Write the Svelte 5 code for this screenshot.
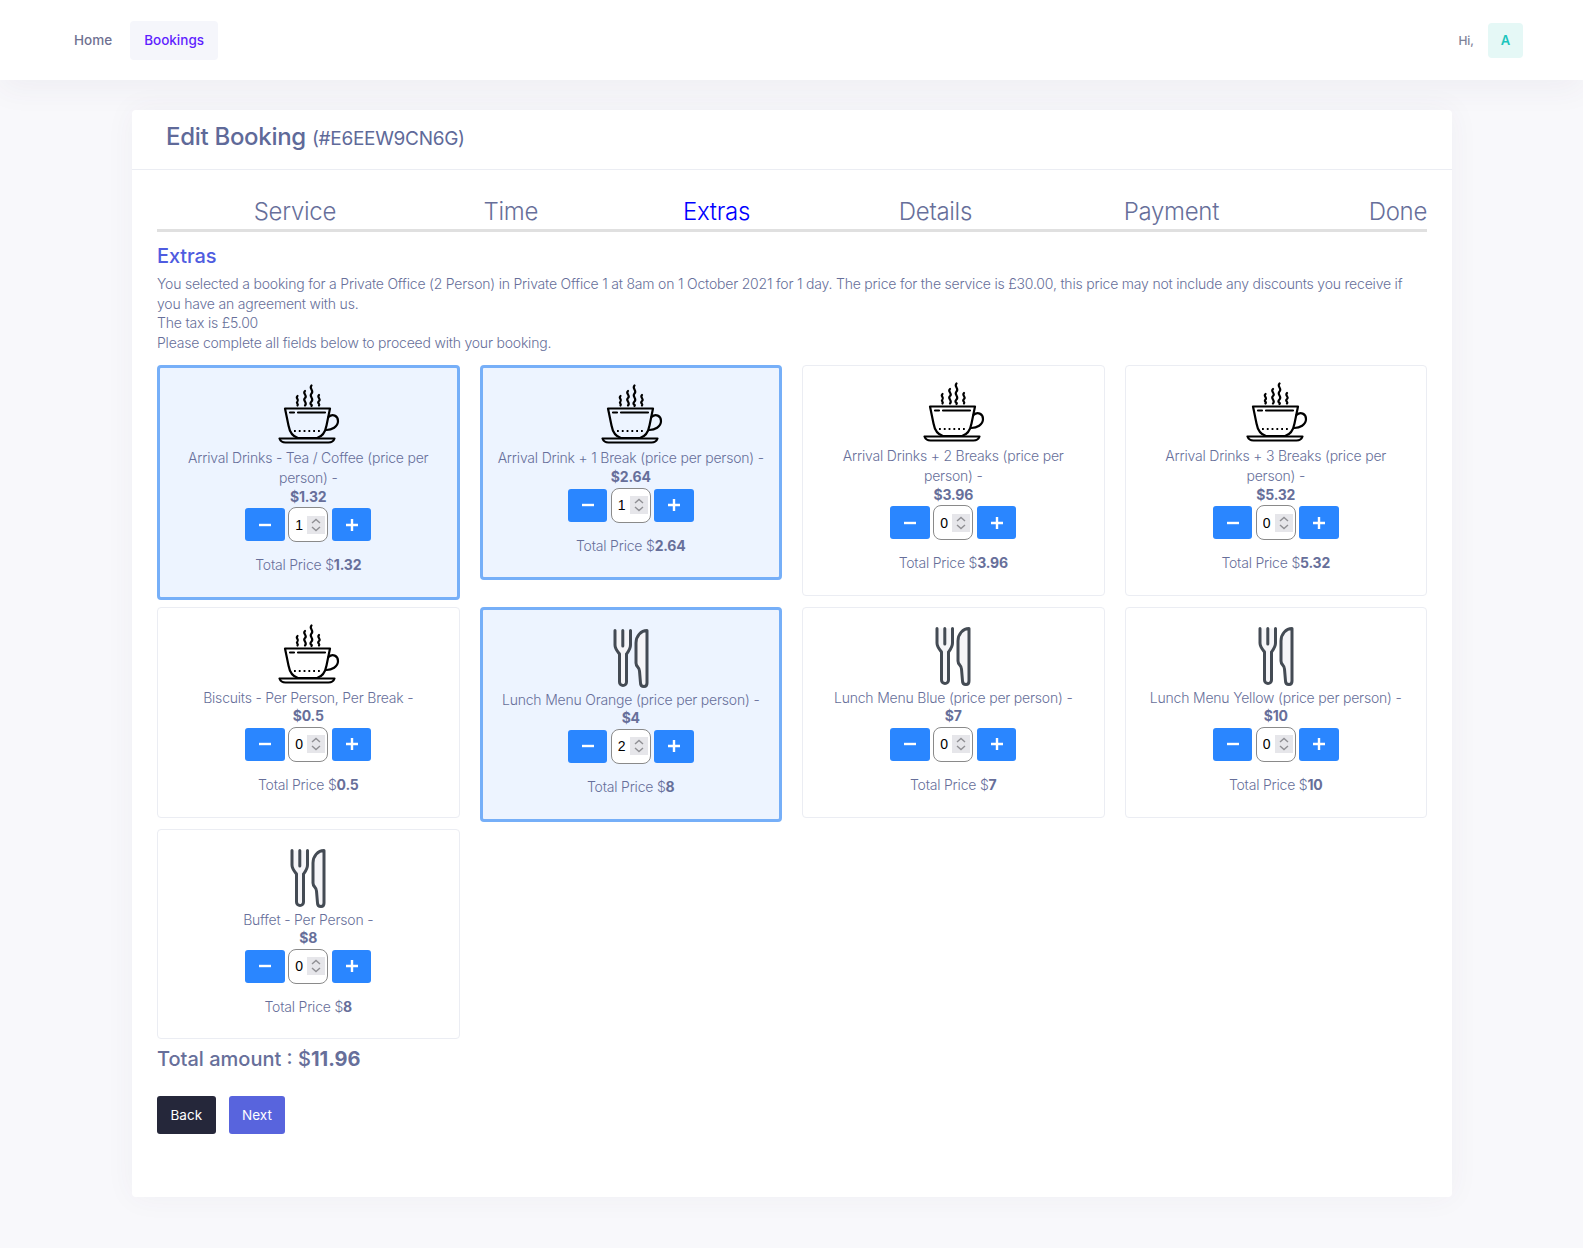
<script>
	const STEPS = ['Service', 'Time', 'Extras', 'Details', 'Payment', 'Done'];

	let extras = $state([
		{ name: 'Arrival Drinks - Tea / Coffee (price per person) -', price: 1.32, qty: 1, icon: 'cup' },
		{ name: 'Arrival Drink + 1 Break (price per person) -', price: 2.64, qty: 1, icon: 'cup' },
		{ name: 'Arrival Drinks + 2 Breaks (price per person) -', price: 3.96, qty: 0, icon: 'cup' },
		{ name: 'Arrival Drinks + 3 Breaks (price per person) -', price: 5.32, qty: 0, icon: 'cup' },
		{ name: 'Biscuits - Per Person, Per Break -', price: 0.5, qty: 0, icon: 'cup' },
		{ name: 'Lunch Menu Orange (price per person) -', price: 4, qty: 2, icon: 'cutlery' },
		{ name: 'Lunch Menu Blue (price per person) -', price: 7, qty: 0, icon: 'cutlery' },
		{ name: 'Lunch Menu Yellow (price per person) -', price: 10, qty: 0, icon: 'cutlery' },
		{ name: 'Buffet - Per Person -', price: 8, qty: 0, icon: 'cutlery' }
	]);

	const money = (n) => +n.toFixed(2);
	let total = $derived(money(extras.reduce((sum, e) => sum + e.price * e.qty, 0)));
</script>

<header class="topbar">
	<nav class="nav">
		<a class="nav-link" href="#home">Home</a>
		<a class="nav-link active" href="#bookings">Bookings</a>
	</nav>
	<div class="user">
		<span class="hi">Hi,</span>
		<span class="avatar">A</span>
	</div>
</header>

<main class="page">
	<section class="card">
		<div class="card-head">
			<h1>Edit Booking <small>(#E6EEW9CN6G)</small></h1>
		</div>
		<div class="card-body">
			<div class="steps">
				{#each STEPS as step}
					<div class="step" class:current={step === 'Extras'}>{step}</div>
				{/each}
			</div>

			<h2>Extras</h2>
			<p class="intro">
				You selected a booking for a Private Office (2 Person) in Private Office 1 at 8am on 1 October 2021 for 1 day. The price for the service is £30.00, this price may not include any discounts you receive if you have an agreement with us.<br />
				The tax is £5.00<br />
				Please complete all fields below to proceed with your booking.
			</p>

			<div class="extras">
				{#each extras as extra}
					<div class="extra" class:selected={extra.qty > 0}>
						{#if extra.icon === 'cup'}
							<svg class="icon" viewBox="0 -1 60 60" fill="none" stroke="#000" stroke-width="2.200" stroke-linecap="round" stroke-linejoin="round">
								<path d="M19.500 12c-2.500 2 2 3.500 0 5.500s1.500 2.500 0 4M27 7c-3 2.500 3 4.500 0 7s3 4.500 0 7.500M33.500 1.500c-3 3 3 5 0 8s3 5 0 8 1.500 3 0 4.500M41 11c-2.500 2.500 2.500 4 0 6s1.500 3 0 4.500" />
								<path d="M7 24.500h45l-3.500 17c-1 5.500-4 11-9.500 12.500H20c-5.500-1.500-8.500-7-9.500-12.500z" />
								<path d="M12 28.500h4M20 28.500h27" />
								<path d="M16 47h28" stroke-dasharray="1.800 3" stroke-linecap="butt" />
								<path d="M50.500 33c4-3.500 9.500-1.500 9.500 4 0 6-6.500 9-11.500 9" />
								<path d="M1.500 54.500h55c-1 3-3 4-6 4H7.500c-3 0-5-1-6-4z" />
							</svg>
						{:else}
							<svg class="icon" viewBox="0 -3 60 60" fill="#f5f5f8" stroke="#444b54" stroke-width="3" stroke-linecap="round" stroke-linejoin="round">
								<path d="M14 2.500V17c0 4 3 7 4.500 9v28a3.500 3.500 0 0 0 7 0V26c1.500-2 4-5 4-9V2.500M21.800 2.500V18" />
								<path d="M46 2.500V55c0 2.500-1.500 3.500-3 3.500-2 0-3.500-1-3.500-3.500l-1-12c0-4-3.500-4-3.500-8V15c0-7 5-12.500 11-12.500z" />
							</svg>
						{/if}
						<div class="extra-name">{extra.name}</div>
						<strong class="extra-price">${extra.price}</strong>
						<div class="stepper">
							<button type="button" class="step-btn" onclick={() => (extra.qty = Math.max(0, extra.qty - 1))}>
								<svg viewBox="0 0 12 12" width="12" height="12"><rect x="0" y="4.800" width="12" height="2.400" fill="#fff" /></svg>
							</button>
							<input type="number" min="0" bind:value={extra.qty} />
							<button type="button" class="step-btn" onclick={() => (extra.qty += 1)}>
								<svg viewBox="0 0 12 12" width="12" height="12"><path d="M4.800 0h2.400v4.800H12v2.400H7.200V12H4.800V7.200H0V4.800h4.800z" fill="#fff" /></svg>
							</button>
						</div>
						<div class="extra-total">Total Price $<strong>{money(extra.price * Math.max(extra.qty, 1))}</strong></div>
					</div>
				{/each}
			</div>

			<div class="amount">Total amount : $<strong>{total}</strong></div>

			<div class="actions">
				<button type="button" class="btn dark">Back</button>
				<button type="button" class="btn primary">Next</button>
			</div>
		</div>
	</section>
</main>

<style>
	:global(body) {
		margin: 0;
		background: #f8f8fb;
		font-family: Inter, 'Noto Sans', sans-serif;
		color: #676f9a;
	}

	/* top bar */
	.topbar {
		height: 80px;
		box-sizing: border-box;
		padding: 0 60px;
		background: #fff;
		display: flex;
		align-items: center;
		justify-content: space-between;
		box-shadow: 0 10px 30px 0 rgba(82, 63, 105, 0.05);
	}

	.nav {
		display: flex;
		gap: 4px;
	}

	.nav-link {
		display: block;
		padding: 0 14px;
		height: 39px;
		line-height: 39px;
		border-radius: 4px;
		font-size: 13.5px;
		font-weight: 500;
		color: #6f7191;
		text-decoration: none;
	}

	.nav-link.active {
		background: #f5f6fb;
		color: #5f1fff;
	}

	.user {
		display: flex;
		align-items: center;
		gap: 14px;
	}

	.hi {
		font-size: 12px;
		font-weight: 500;
		color: #7e8299;
	}

	.avatar {
		width: 35px;
		height: 35px;
		border-radius: 4px;
		background: #e5f8f6;
		color: #1bc5bd;
		font-size: 13px;
		font-weight: 600;
		display: flex;
		align-items: center;
		justify-content: center;
	}

	/* page card */
	.page {
		padding: 30px 131px 50px 132px;
	}

	.card {
		background: #fff;
		border-radius: 4px;
		box-shadow: 0 0 30px 0 rgba(82, 63, 105, 0.05);
	}

	.card-head {
		height: 60px;
		box-sizing: border-box;
		padding: 0 34px;
		border-bottom: 1px solid #ebedf3;
		display: flex;
		align-items: center;
	}

	h1 {
		margin: 0 0 6px;
		font-size: 24px;
		font-weight: 500;
		letter-spacing: -0.3px;
		color: #5f6a99;
	}

	h1 small {
		font-size: 19px;
		font-weight: 400;
	}

	.card-body {
		padding: 26px 25px 63px;
	}

	/* wizard steps */
	.steps {
		display: grid;
		grid-template-columns: 179px 202px 212px 222px 247px 208px;
		border-bottom: 3px solid #e0e0e0;
		height: 33px;
	}

	.step {
		text-align: right;
		font-size: 24px;
		line-height: 32px;
		font-weight: 300;
		letter-spacing: -0.3px;
	}

	.step.current {
		color: #0000ff;
	}

	h2 {
		margin: 11px 0 5px;
		font-size: 20px;
		line-height: 26px;
		font-weight: 500;
		letter-spacing: -0.1px;
		color: #4f5ce0;
	}

	.intro {
		margin: 0 0 13px;
		font-size: 14px;
		line-height: 19.6px;
		font-weight: 300;
		letter-spacing: -0.2px;
	}

	/* extras grid */
	.extras {
		display: grid;
		grid-template-columns: repeat(4, 1fr);
		column-gap: 20px;
		row-gap: 7px;
		align-items: start;
	}

	.extra {
		box-sizing: border-box;
		border: 1px solid #ebedf3;
		border-radius: 4px;
		padding: 15px 15px 22px;
		display: flex;
		flex-direction: column;
		align-items: center;
		text-align: center;
		font-size: 14px;
		line-height: 19.6px;
		font-weight: 300;
		letter-spacing: -0.2px;
	}

	.extra.selected {
		border: 3px solid #76aff8;
		background: #edf4ff;
	}

	.icon {
		width: 60px;
		height: 60px;
		display: block;
		margin-bottom: 5px;
		overflow: visible;
	}

	.extra-price {
		margin-top: -1px;
		font-weight: 700;
	}

	.stepper {
		display: flex;
		align-items: center;
		gap: 3.5px;
		margin-top: 1px;
	}

	.step-btn {
		width: 39.5px;
		height: 33px;
		border: 0;
		border-radius: 3px;
		background: #2a86ff;
		padding: 0;
		display: flex;
		align-items: center;
		justify-content: center;
	}

	input {
		width: 40px;
		height: 35px;
		box-sizing: border-box;
		border: 1px solid #8a8a8a;
		border-radius: 8px;
		background: #fff;
		padding: 0 2px 0 6px;
		font-family: 'Liberation Sans', sans-serif;
		font-size: 14px;
		color: #000;
	}

	input::-webkit-inner-spin-button {
		-webkit-appearance: none;
		appearance: none;
		opacity: 1;
		width: 18px;
		height: 18px;
		background: #e6e6ea url("data:image/svg+xml,%3Csvg xmlns='http://www.w3.org/2000/svg' width='18' height='18' fill='none' stroke='%23909094' stroke-width='1.4'%3E%3Cpath d='M5 7l4-3.500L13 7M5 11l4 3.500 4-3.500'/%3E%3C/svg%3E") no-repeat center;
	}

	.extra-total {
		margin-top: 13px;
	}

	.extra-total strong {
		font-weight: 700;
	}

	.amount {
		margin-top: 5px;
		font-size: 20px;
		line-height: 30px;
		font-weight: 500;
	}

	.amount strong {
		font-weight: 700;
	}

	.actions {
		display: flex;
		gap: 13px;
		margin-top: 22px;
	}

	.btn {
		height: 38px;
		padding: 0 13.5px;
		border: 0;
		border-radius: 3px;
		font-family: inherit;
		font-size: 13.5px;
		color: #fff;
	}

	.btn.dark {
		background: #25273a;
	}

	.btn.primary {
		background: #5864dd;
	}
</style>
